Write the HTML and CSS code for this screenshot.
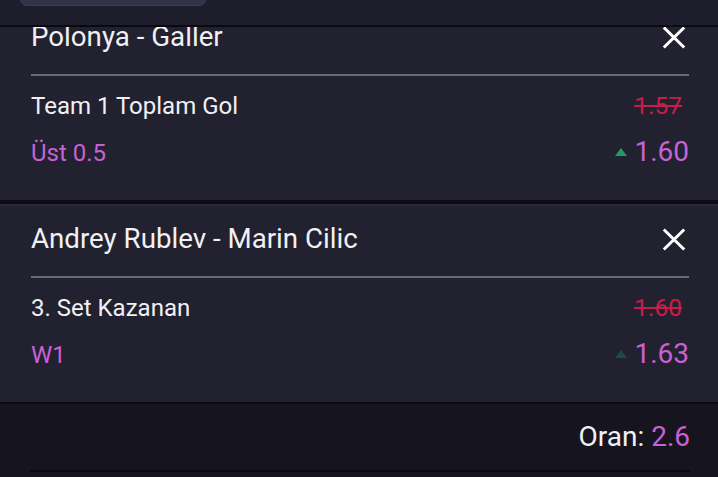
FILE: index.html
```html
<!DOCTYPE html>
<html lang="tr">
<head>
<meta charset="utf-8">
<title>Kupon</title>
<link rel="stylesheet" href="styles.css">
</head>
<body>
<div class="topbar"><div class="pill"></div></div>
<div class="divider"></div>
<div class="list">
  <div class="card card-first">
    <div class="card-head">
      <span class="match">Polonya - Galler</span>
      <svg class="close" viewBox="0 0 24 23" width="24" height="23"><path d="M1.8 1.5 L22.2 21.5 M22.2 1.5 L1.8 21.5" stroke="#fff" stroke-width="3" fill="none"/></svg>
    </div>
    <div class="sep"></div>
    <div class="row market">
      <span>Team 1 Toplam Gol</span>
      <span class="old">1.57</span>
    </div>
    <div class="row sel">
      <span class="pick">Üst 0.5</span>
      <span class="odd"><span class="tri up"></span><span class="new">1.60</span></span>
    </div>
  </div>
  <div class="card">
    <div class="card-head">
      <span class="match">Andrey Rublev - Marin Cilic</span>
      <svg class="close" viewBox="0 0 24 23" width="24" height="23"><path d="M1.8 1.5 L22.2 21.5 M22.2 1.5 L1.8 21.5" stroke="#fff" stroke-width="3" fill="none"/></svg>
    </div>
    <div class="sep"></div>
    <div class="row market">
      <span>3. Set Kazanan</span>
      <span class="old">1.60</span>
    </div>
    <div class="row sel">
      <span class="pick">W1</span>
      <span class="odd"><span class="tri dim"></span><span class="new">1.63</span></span>
    </div>
  </div>
</div>
<div class="footer">
  <div class="total">Oran: <span class="total-val">2.6</span></div>
  <div class="footer-line"></div>
</div>
</body>
</html>
```
FILE: styles.css
```css
html, body {
  margin: 0;
  padding: 0;
  background: #16151f;
  font-family: Roboto, "Noto Sans", sans-serif;
  color: #f1f0f4;
  overflow: hidden;
  height: 477px;
}
.topbar {
  height: 25px;
  background: #1e1d2b;
  display: flex;
  align-items: flex-end;
  padding: 0 0 19px 20px;
  box-sizing: border-box;
  overflow: hidden;
}
.pill {
  width: 186px;
  height: 20px;
  flex: none;
  background: #32334a;
  border: 1px solid #3d3e56;
  border-radius: 7px;
  box-sizing: border-box;
}
.divider {
  height: 2px;
  background: #0a0912;
}
.list {
  display: flex;
  flex-direction: column;
  gap: 4px;
  background: #0c0b15;
  height: 375px;
  overflow: hidden;
  border-bottom: 2px solid #0a0912;
}
.card {
  flex: none;
  height: 198px;
  box-sizing: border-box;
  background: #22212f;
  border-top: 2px solid #2a2939;
  padding: 19px 29px 0 31px;
}
.card-first {
  margin-top: -25px;
}
.card-head {
  display: flex;
  justify-content: space-between;
  align-items: center;
  height: 28px;
}
.match {
  font-size: 27.7px;
  line-height: 28px;
}
.close {
  display: block;
  margin-right: 3px;
}
.sep {
  height: 2px;
  background: #6c6a74;
  margin-top: 23px;
}
.row {
  display: flex;
  justify-content: space-between;
  align-items: baseline;
}
.market {
  margin-top: 16px;
  font-size: 24px;
  line-height: 28px;
}
.old {
  color: #c71d49;
  text-decoration: line-through;
  text-decoration-thickness: 2px;
  font-size: 24.5px;
  padding-right: 7px;
}
.sel {
  margin-top: 16px;
  line-height: 32px;
}
.pick {
  color: #c762d6;
  font-size: 24px;
}
.odd {
  display: block;
  white-space: nowrap;
}
.new {
  color: #c762d6;
  font-size: 28px;
}
.tri {
  display: inline-block;
  width: 0;
  height: 0;
  border-left: 6.5px solid transparent;
  border-right: 6.5px solid transparent;
  border-bottom: 8px solid #1f9a6b;
  margin-right: 7px;
  vertical-align: 5.5px;
}
.tri.dim {
  border-bottom-color: #1e4a40;
}
.footer {
  padding: 0 28px 0 30px;
}
.total {
  text-align: right;
  font-size: 28px;
  line-height: 32px;
  padding-top: 17px;
}
.total-val {
  color: #c762d6;
}
.footer-line {
  height: 2px;
  background: #0a0912;
  margin-top: 17px;
}
```
